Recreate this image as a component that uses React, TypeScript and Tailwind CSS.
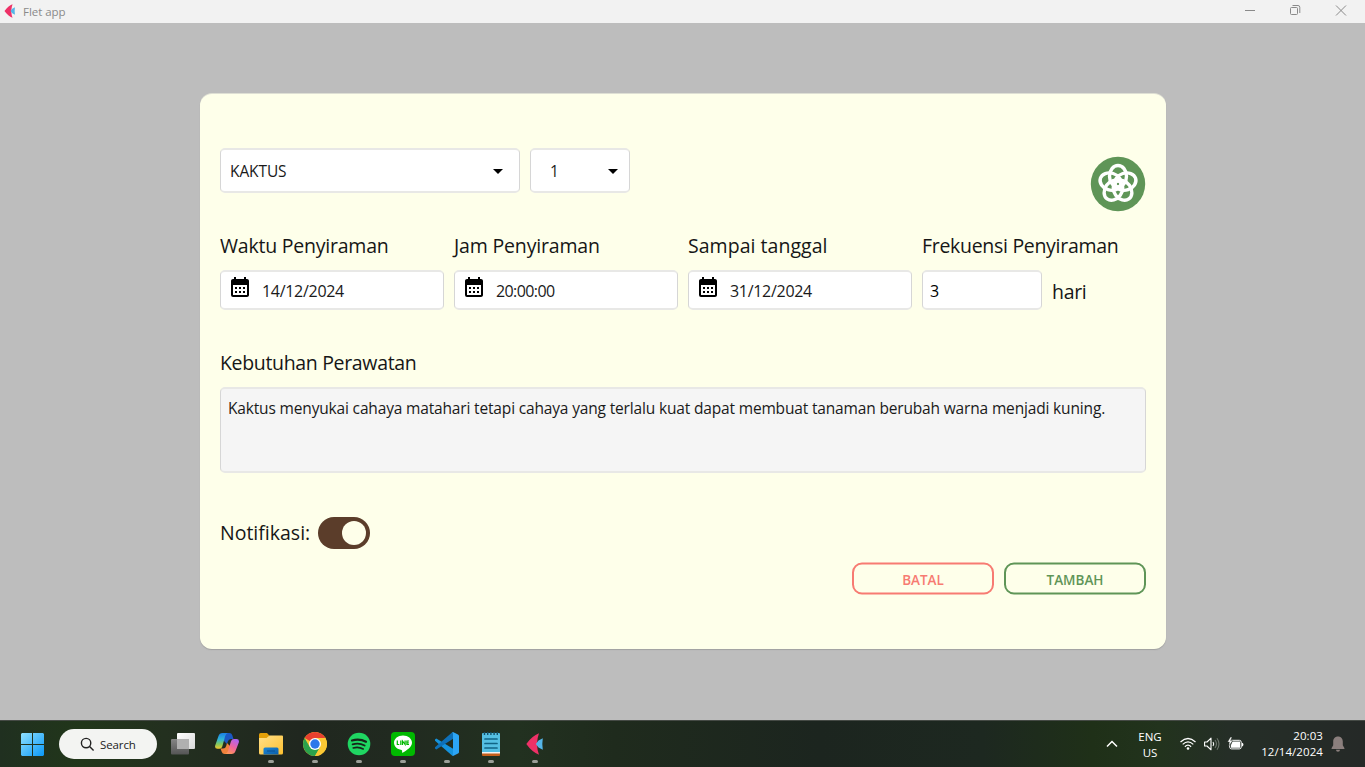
import React from "react";
import { MdArrowDropDown, MdCalendarMonth } from "react-icons/md";

function FletLogo({ className }: { className: string }) {
  return (
    <svg viewBox="0 0 18 22" className={className}>
      <path d="M0.3 11 Q6 3 13 0.3 Q11.2 5 11 11 Q11.2 17 13 21.7 Q6 19 0.3 11Z" fill="#ee3167" />
      <path d="M9.8 11 L12.5 7.5 L16.8 5.3 L16.3 11 L16.8 16.7 L12.5 14.5Z" fill="#55b5e8" />
    </svg>
  );
}

function TitleBar() {
  return (
    <header className="flex h-[23px] shrink-0 items-center bg-[#f2f2f2] pl-[4px]">
      <FletLogo className="mb-px h-[14px] w-[12px]" />
      <span className="ml-[7px] text-[11.5px] leading-[22px] tracking-[-0.05px] text-[#8a8a8a]">Flet app</span>
      <div className="mb-[3px] ml-auto flex text-[#8a8a8a]">
        <svg viewBox="0 0 46 20" className="h-[20px] w-[46px]" stroke="currentColor" fill="none">
          <path d="M18 10.500h10" />
        </svg>
        <svg viewBox="0 0 46 20" className="h-[20px] w-[46px]" stroke="currentColor" fill="none">
          <rect x="17.5" y="7.5" width="7" height="7" rx="1" />
          <path d="M19.5 5.5H25a1.8 1.8 0 0 1 1.8 1.8V13" />
        </svg>
        <svg viewBox="0 0 46 20" className="h-[20px] w-[46px]" stroke="currentColor" fill="none">
          <path d="M17 5.500l10 10M27 5.500l-10 10" />
        </svg>
      </div>
    </header>
  );
}

const box = "flex rounded-[5px] border-x border-y-2 border-x-[#d6d6d6] border-y-[#e8e8e6] text-black";

function Select({ value, className }: { value: string; className: string }) {
  return (
    <div className={`${box} h-[45px] items-center justify-between bg-white text-[15.5px] ${className}`}>
      <span className="pt-[2px] tracking-[-0.1px] text-[#1a1a1a]">{value}</span>
      <MdArrowDropDown className="size-6" />
    </div>
  );
}

function DateField({ label, labelTracking, value, tracking }: { label: string; labelTracking: string; value: string; tracking: string }) {
  return (
    <div className="w-[224px]">
      <Label tracking={labelTracking}>{label}</Label>
      <div className={`${box} mt-[9px] h-[40px] bg-white pl-[7px]`}>
        <MdCalendarMonth className="mt-[3px] size-6" />
        <span className={`ml-[10px] mt-[7px] text-[16px] leading-[24px] text-[#1a1a1a] ${tracking}`}>{value}</span>
      </div>
    </div>
  );
}

function Label({ children, tracking }: { children: React.ReactNode; tracking: string }) {
  return (
    <div className={`h-[30px] whitespace-nowrap text-[19.5px] leading-[30px] text-[#161616] ${tracking}`}>{children}</div>
  );
}

function FlowerBadge() {
  return (
    <svg viewBox="0 0 56 56" className="size-[56px]">
      <circle cx="28" cy="28" r="27.2" fill="#5f9557" />
      <g fill="none" stroke="#fff" strokeWidth="3.4">
        {[0, 72, 144, 216, 288].map((a) => (
          <ellipse key={a} cx="28" cy="20.200" rx="8.500" ry="10.700" transform={`rotate(${a} 28 28)`} />
        ))}
      </g>
    </svg>
  );
}

function Card() {
  return (
    <main className="flex h-[555px] w-[966px] flex-col rounded-[12px] bg-[#feffea] px-[20px] shadow-[0_-1px_#dedfd4,0_1px_1px_#999c]">
      <div className="mt-[54px] flex h-[64px]">
        <Select value="KAKTUS" className="w-[300px] pl-[9px] pr-[9px]" />
        <Select value="1" className="ml-[10px] w-[100px] pl-[19px] pr-[4px]" />
        <div className="ml-auto mt-[8px]">
          <FlowerBadge />
        </div>
      </div>
      <div className="mt-[19px] flex gap-[10px]">
        <DateField label="Waktu Penyiraman" labelTracking="tracking-[-0.22px]" value="14/12/2024" tracking="tracking-[-0.3px]" />
        <DateField label="Jam Penyiraman" labelTracking="tracking-[-0.17px]" value="20:00:00" tracking="tracking-[-0.6px]" />
        <DateField label="Sampai tanggal" labelTracking="tracking-[0.04px]" value="31/12/2024" tracking="tracking-[-0.3px]" />
        <div>
          <Label tracking="tracking-[-0.3px]">Frekuensi Penyiraman</Label>
          <div className="mt-[9px] flex">
            <div className={`${box} h-[40px] w-[120px] bg-white pl-[7px] text-[16px] leading-[38px]`}>3</div>
            <span className="ml-[10px] mt-[7px] text-[19.5px] leading-[30px] tracking-[-0.3px] text-[#161616]">hari</span>
          </div>
        </div>
      </div>
      <div className="mt-[38px]">
        <Label tracking="tracking-[-0.33px]">Kebutuhan Perawatan</Label>
        <div className={`${box} mt-[9px] h-[86px] whitespace-nowrap bg-[#f5f5f5] pl-[7px] pt-[7px] text-[15.5px] leading-[24px] tracking-[-0.162px]`}>
          <span className="text-[#1a1a1a]">Kaktus menyukai cahaya matahari tetapi cahaya yang terlalu kuat dapat membuat tanaman berubah warna menjadi kuning.</span>
        </div>
      </div>
      <div className="mt-[44px] flex h-[32px] items-center">
        <div className="w-[98px]">
          <Label tracking="tracking-[0px]">Notifikasi:</Label>
        </div>
        <div className="flex h-[32px] w-[52px] items-center justify-end rounded-full bg-[#5b3d2a] pr-[4px]">
          <span className="size-[24px] rounded-full bg-[#feffea]" />
        </div>
      </div>
      <div className="mt-[13px] flex translate-y-[0.5px] justify-end gap-[10px] text-[13.5px] font-semibold">
        <button className="h-[32px] w-[142px] rounded-[10px] border-2 border-[#f77b72] pt-[2px] text-[#f77b72]">
          BATAL
        </button>
        <button className="h-[32px] w-[142px] rounded-[10px] border-2 border-[#5f9557] pt-[2px] text-[#5f9557]">
          TAMBAH
        </button>
      </div>
    </main>
  );
}

function TaskItem({ children, running }: { children: React.ReactNode; running?: boolean }) {
  return (
    <div className="flex h-[47px] w-[44px] flex-col items-center pt-[12px]">
      <div className="size-6">{children}</div>
      {running && <span className="mt-[4px] h-[3px] w-[6px] rounded-full bg-[#9b9f98]" />}
    </div>
  );
}

function WindowsIcon() {
  return (
    <svg viewBox="0 0 23 23" className="size-[23px]">
      <defs>
        <linearGradient id="win" x1="0" y1="0" x2="23" y2="23" gradientUnits="userSpaceOnUse">
          <stop stopColor="#8fe0ff" />
          <stop offset="1" stopColor="#0a99f7" />
        </linearGradient>
      </defs>
      <path fill="url(#win)" d="M1 0h10v11H0V1zM12 0h10l1 1v10H12zM0 12h11v11H1l-1-1zM12 12h11v10l-1 1H12z" />
    </svg>
  );
}

function TaskViewIcon() {
  return (
    <svg viewBox="0 0 24 24">
      <defs>
        <linearGradient id="tv" x1="0" y1="0" x2="1" y2="1">
          <stop stopColor="#fff" />
          <stop offset="1" stopColor="#d9d9d9" />
        </linearGradient>
        <linearGradient id="tv2" x1="0" y1="0" x2="0" y2="1">
          <stop stopColor="#858585" />
          <stop offset="1" stopColor="#555" />
        </linearGradient>
      </defs>
      <rect x="0" y="7" width="18" height="15.5" rx="1" fill="url(#tv2)" />
      <rect x="6" y="1" width="18" height="16" rx="1" fill="url(#tv)" />
      <path d="M6 7h12v10H6z" fill="#b0b0b0" />
    </svg>
  );
}

function CopilotIcon() {
  return (
    <svg viewBox="0 0 24 24">
      <defs>
        <linearGradient id="cp1" x1="0" y1="0" x2="0" y2="1">
          <stop stopColor="#1b7fe6" />
          <stop offset="0.4" stopColor="#2fb4d8" />
          <stop offset="0.7" stopColor="#7fc860" />
          <stop offset="1" stopColor="#f3c62c" />
        </linearGradient>
        <linearGradient id="cp2" x1="0.7" y1="0" x2="0.2" y2="1">
          <stop stopColor="#b063f2" />
          <stop offset="0.5" stopColor="#f0649c" />
          <stop offset="1" stopColor="#ff9a52" />
        </linearGradient>
      </defs>
      <path d="M8 1h6.500q2 0 2.700 2l1.300 4H16q-2.500 0-3.200 2.500L12 12 9 9z" fill="#1b57c4" />
      <path d="M15.500 22H9.500q-2 0-2.700-2L5.500 16.500H8q2.500 0 3.200-2.500L12 11l3 3z" fill="#f0823c" />
      <path d="M7.500 1H13q-2 .5-2.800 3L7.300 14.500Q6.600 16.700 4.500 16.700H2.500Q-.6 16.700.2 13.500L3.500 4Q4.400 1 7.500 1z" fill="url(#cp1)" />
      <path d="M16.500 22H10q2.300-.5 3-3l3-9.800Q16.700 7 19 7h2.500q3.100 0 2.300 3.500L20.500 19Q19.600 22 16.500 22z" fill="url(#cp2)" />
    </svg>
  );
}

function ExplorerIcon() {
  return (
    <svg viewBox="0 0 24 24">
      <defs>
        <linearGradient id="fo" x1="0" y1="0" x2="1" y2="1">
          <stop stopColor="#ffe08a" />
          <stop offset="1" stopColor="#fdc02f" />
        </linearGradient>
        <linearGradient id="fb" x1="0" y1="0" x2="1" y2="1">
          <stop stopColor="#1a86d6" />
          <stop offset="1" stopColor="#0c5ea8" />
        </linearGradient>
      </defs>
      <path d="M0 2.500Q0 1 1.500 1H8l2.500 2.800L8 8H0z" fill="#e3a008" />
      <path d="M0 6h7.500l3-2.500H23q1 0 1 1V21q0 1.500-1.500 1.500h-21Q0 22.500 0 21z" fill="url(#fo)" />
      <path d="M4.500 22.500V17q0-1.500 1.500-1.500h12q1.500 0 1.500 1.500v5.500z" fill="url(#fb)" />
      <path d="M8 19h8" stroke="#0a4f90" />
    </svg>
  );
}

function ChromeIcon() {
  return (
    <svg viewBox="0 0 24 24">
      <circle cx="12" cy="12" r="12" fill="#fcc934" />
      <path d="M12 12L1.610 6A12 12 0 0 1 22.390 6z" fill="#e8402f" />
      <path d="M1.610 6A12 12 0 0 0 12 24l5.200-9L12 12 6.800 15z" fill="#2ba24c" />
      <path d="M12 6h10.390A12 12 0 0 1 12 24l5.200-9z" fill="#fcc934" />
      <circle cx="12" cy="12" r="6" fill="#fff" />
      <circle cx="12" cy="12" r="4.700" fill="#2d78ea" />
    </svg>
  );
}

function SpotifyIcon() {
  return (
    <svg viewBox="0 0 24 24">
      <circle cx="12" cy="12" r="11.300" fill="#1fd662" />
      <g fill="none" stroke="#17241a" strokeLinecap="round">
        <path d="M5 8.500q7.500-2.200 14 1.200" strokeWidth="2.200" />
        <path d="M5.600 12.300q6.500-1.900 12 1.200" strokeWidth="1.900" />
        <path d="M6.200 15.900q5.500-1.500 10 1.100" strokeWidth="1.600" />
      </g>
    </svg>
  );
}

function LineIcon() {
  return (
    <div className="flex size-6 items-center justify-center rounded-[4px] bg-[#00b900]">
      <svg viewBox="0 0 20 20" className="size-[20px]">
        <path d="M10 1.500c-5 0-9 3.200-9 7.300 0 3.700 3.200 6.600 7.500 7.200.6.200.7.500.6 2.200 0 .5.400.6.900.3 3.500-2 9-5.500 9-9.700 0-4.100-4-7.300-9-7.300z" fill="#fff" />
        <g stroke="#00b900" strokeWidth="1.200" fill="none">
          <path d="M4.300 6.500v4h2M7.800 6.500v4.500M9.500 11V7l2.600 3.500v-4M16 7h-2.100v3.500H16M14 8.800h1.800" />
        </g>
      </svg>
    </div>
  );
}

function CodeIcon() {
  return (
    <svg viewBox="0 0 24 24">
      <path d="M1.300 6.500L0 7.600v1.200L17 23.500l1.500-.5v-6z" fill="#1593dd" />
      <path d="M0 15.200v1.200l1.300 1.100 17.200-11V1L17 .5z" fill="#0e70b8" />
      <path d="M17 .5q1 .3 1 1.500v20q0 1.200-1 1.500l1 .4 5-2.400q1-.5 1-1.500V4q0-1-1-1.500L18 .1z" fill="#2ca5f5" />
    </svg>
  );
}

function NotepadIcon() {
  return (
    <svg viewBox="0 0 24 24">
      <path d="M3 20h18v3q0 1-1 1H4q-1 0-1-1z" fill="#c55f1b" />
      <path d="M3 19h18v2.500H3z" fill="#f3f3f3" />
      <path d="M3 2q0-1 1-1h16q1 0 1 1v18H3z" fill="#54bfe3" />
      <path d="M5.500 0v3M8.700 0v3M11.900 0v3M15.100 0v3M18.300 0v3" stroke="#14506b" strokeWidth="1.400" />
      <path d="M6 7h12M6 11.500h12M6 16h12" stroke="#106486" strokeWidth="1.700" strokeLinecap="round" />
    </svg>
  );
}

function Taskbar() {
  return (
    <footer className="flex h-[47px] shrink-0 bg-[linear-gradient(90deg,#203020_0%,#21361a_6%,#23301f_12%,#20271f_22%,#212a20_29%,#223120_38%,#1f2b1d_45%,#1c251f_60%,#1d2820_72%,#1f3018_80%,#22331d_85%,#252e27_90%,#252927_100%)] shadow-[inset_0_1px_#454a45]">
      <div className="ml-[21px] mt-[13px]">
        <WindowsIcon />
      </div>
      <div className="ml-[15px] mt-[9px] flex h-[30px] w-[98px] items-center rounded-full bg-[#f3f4f2] pl-[21px] text-[#222]">
        <svg viewBox="0 0 16 16" className="size-[15px]" fill="none" stroke="currentColor" strokeWidth="1.500">
          <circle cx="6.500" cy="6.500" r="5" />
          <path d="M10.200 10.200l4.300 4.300" />
        </svg>
        <span className="ml-[5px] pt-[2px] text-[11.500px] tracking-[-0.100px]">Search</span>
      </div>
      <nav className="ml-[4px] flex">
        <TaskItem><TaskViewIcon /></TaskItem>
        <TaskItem><CopilotIcon /></TaskItem>
        <TaskItem running><ExplorerIcon /></TaskItem>
        <TaskItem running><ChromeIcon /></TaskItem>
        <TaskItem running><SpotifyIcon /></TaskItem>
        <TaskItem running><LineIcon /></TaskItem>
        <TaskItem running><CodeIcon /></TaskItem>
        <TaskItem running><NotepadIcon /></TaskItem>
        <TaskItem running><FletLogo className="mx-auto mt-px h-[22px] w-[18px]" /></TaskItem>
      </nav>
      <div className="ml-auto flex items-center pt-[1px] text-[11.500px] leading-[16px] text-white">
        <svg viewBox="0 0 12 8" className="h-[8px] w-[12px]" fill="none" stroke="currentColor" strokeWidth="1.500">
          <path d="M1 6.500L6 1.500l5 5" />
        </svg>
        <div className="ml-[18px] w-[28px] pt-[2px] text-center">ENG<br />US</div>
        <svg viewBox="0 0 16 14" className="ml-[16px] h-[14px] w-[16px]" fill="none" stroke="currentColor" strokeWidth="1.200">
          <path d="M.5 5q7.500-7 15 0M2.700 7.400q5.300-5 10.600 0M4.900 9.700q3.100-3 6.200 0" />
          <circle cx="8" cy="11.500" r="1.300" fill="currentColor" stroke="none" />
        </svg>
        <svg viewBox="0 0 16 14" className="ml-[8px] h-[14px] w-[16px]" fill="none" stroke="currentColor" strokeWidth="1.100">
          <path d="M.6 5H3l4-3.800v11.600L3 9H.6z" strokeLinejoin="round" />
          <path d="M9 5q1.500 2 0 4" />
          <path d="M11 3q3 4 0 8M13 1.300q4 5.700 0 11.400" stroke="#6c746c" />
        </svg>
        <svg viewBox="0 0 17 14" className="ml-[7px] h-[14px] w-[17px]">
          <rect x="2.700" y="3.300" width="11.500" height="8.600" rx="1.800" fill="none" stroke="#fff" />
          <path d="M5.500 4.600h7.500v6.100H4V8z" fill="#fff" />
          <path d="M15 5.700q1.400 0 1.400 1.900T15 9.500z" fill="#fff" />
          <path d="M3.500 0L.5 5h2L1.700 9l4-5.300H3.500L5 0z" fill="#fff" stroke="#252e27" strokeWidth=".4" />
        </svg>
        <div className="ml-[16px] w-[63px] whitespace-nowrap text-right tracking-[0.080px]">20:03<br />12/14/2024</div>
        <svg viewBox="0 0 14 16" className="ml-[8px] mr-[20px] h-[16px] w-[14px]" fill="#8b7f7d">
          <path d="M7 .5C4 .5 2.200 2.700 2.200 5.500v3.700L.5 12.300q-.2.700.5.700h12q.7 0 .5-.7l-1.700-3.100V5.500C11.800 2.700 10 .5 7 .5zM5 13.700a2 2 0 0 0 4 0z" />
        </svg>
      </div>
    </footer>
  );
}

export default function App() {
  return (
    <div className="flex h-[767px] w-[1365px] flex-col overflow-hidden bg-[#bdbdbd] font-['Open_Sans','Noto_Sans',sans-serif]">
      <TitleBar />
      <div className="flex flex-1 justify-center pt-[71px] pl-px">
        <Card />
      </div>
      <Taskbar />
    </div>
  );
}
